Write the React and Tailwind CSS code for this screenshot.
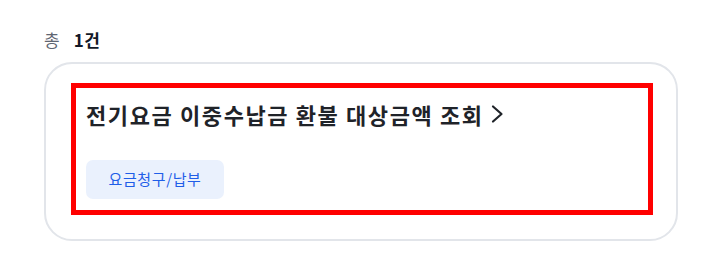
const font = { fontFamily: '"Noto Sans CJK KR", "Noto Sans", sans-serif' };

const App = () => {
  return (
    <div className="min-h-[270px] w-[710px] bg-white pl-[44px] pt-[27px]" style={font}>
      <p className="flex items-center gap-[14px] text-[17px] leading-[26px]">
        <span className="text-[#5f6672]">총</span>
        <span className="font-bold tracking-[0.5px] text-[#111827]">1건</span>
      </p>

      <section className="mt-[9px] w-[634px] rounded-[28px] border-2 border-[#e2e5ea] pb-[24px] pl-[25px] pr-[23px] pt-[19px]">
        <a href="#" className="block border-[5px] border-[#ff0000] pb-[11px] pl-[10px] pt-[10px]">
          <h3 className="flex items-center gap-[6px] text-[22px] font-bold leading-[32px] tracking-[1.6px] text-[#1f2329]">
            전기요금 이중수납금 환불 대상금액 조회
            <svg width="14" height="20" viewBox="0 0 14 20" fill="none">
              <path d="M3 2.5l8.5 7.5-8.5 7.5" stroke="#1f2329" strokeWidth="2.2" strokeLinecap="round" strokeLinejoin="round" />
            </svg>
          </h3>
          <div className="mt-[30px] flex">
            <span className="flex h-[39px] w-[138px] items-center justify-center rounded-[7px] bg-[#eaf1fd] text-[15px] tracking-[0.6px] text-[#1f5ee8]">
              요금청구/납부
            </span>
          </div>
        </a>
      </section>
    </div>
  );
};

export default App;
